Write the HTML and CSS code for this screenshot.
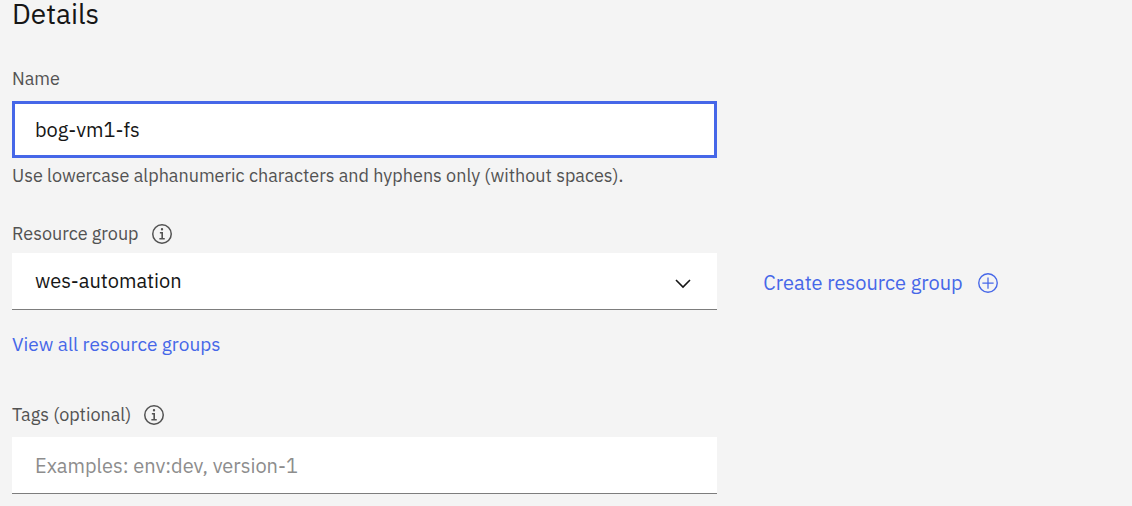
FILE: index.html
```html
<!DOCTYPE html>
<html lang="en">
<head>
<meta charset="utf-8">
<meta name="viewport" content="width=device-width, initial-scale=1">
<title>Details</title>
<link rel="stylesheet" href="styles.css">
</head>
<body>
<main class="details">
  <h1 class="title">Details</h1>
  <form class="form">
    <div class="field field-name">
      <div class="label-row"><label class="label" for="name">Name</label></div>
      <input class="control control-active" id="name" type="text" value="bog-vm1-fs" aria-describedby="name-help">
      <p class="helper" id="name-help">Use lowercase alphanumeric characters and hyphens only (without spaces).</p>
    </div>
    <div class="field field-group">
      <div class="label-row">
        <label class="label" for="group">Resource group</label>
        <button class="icon-button" type="button" aria-label="About resource groups">
          <svg class="icon" viewBox="0 0 32 32" aria-hidden="true"><path fill="currentColor" d="M17.6 22.4V12.6H12.6v2.4h2.4v7.4H11.8v2.4h8.6v-2.4zM16 6.4a1.9 1.9 0 1 0 0 3.8 1.9 1.9 0 0 0 0-3.8z"/><circle cx="16" cy="16" r="14.8" fill="none" stroke="currentColor" stroke-width="2.4"/></svg>
        </button>
      </div>
      <div class="select-wrap">
        <select class="control" id="group"><option>wes-automation</option></select>
        <svg class="chevron" viewBox="0 0 16 10" aria-hidden="true"><path d="M1 1l7 7 7-7" fill="none" stroke="currentColor" stroke-width="1.6"/></svg>
      </div>
    </div>
    <a class="create" href="#create">Create resource group
      <svg class="icon" viewBox="0 0 32 32" aria-hidden="true"><path d="M16 7v18M7 16h18" stroke="currentColor" stroke-width="2"/><circle cx="16" cy="16" r="14.8" fill="none" stroke="currentColor" stroke-width="2.2"/></svg>
    </a>
    <div class="view-all"><a class="link" href="#groups">View all resource groups</a></div>
    <div class="field field-tags">
      <div class="label-row">
        <label class="label" for="tags">Tags (optional)</label>
        <button class="icon-button" type="button" aria-label="About tags">
          <svg class="icon" viewBox="0 0 32 32" aria-hidden="true"><path fill="currentColor" d="M17.6 22.4V12.6H12.6v2.4h2.4v7.4H11.8v2.4h8.6v-2.4zM16 6.4a1.9 1.9 0 1 0 0 3.8 1.9 1.9 0 0 0 0-3.8z"/><circle cx="16" cy="16" r="14.8" fill="none" stroke="currentColor" stroke-width="2.4"/></svg>
        </button>
      </div>
      <input class="control" id="tags" type="text" placeholder="Examples: env:dev, version-1">
    </div>
  </form>
</main>
</body>
</html>
```
FILE: styles.css
```css
* { box-sizing: border-box; }

body {
  margin: 0;
  background: #f4f4f4;
  color: #161616;
  font-family: "IBM Plex Sans", Inter, Roboto, sans-serif;
  font-size: 20px;
  line-height: 24px;
}

.details { padding: 0 16px 12px 12px; }

.title {
  margin: 0 0 31px;
  font-size: 28px;
  font-weight: 400;
  line-height: 28px;
  padding-bottom: 8px;
}

.form {
  display: grid;
  grid-template-columns: minmax(0, 2fr) minmax(0, 1fr);
  column-gap: 46px;
}

.field,
.view-all { grid-column: 1; }

.label-row {
  display: flex;
  align-items: center;
  gap: 13px;
  margin-bottom: 7px;
}

.label,
.helper {
  color: #525252;
  font-size: 18px;
}

.field-name .label-row { margin-bottom: 10px; }

.helper { margin: 6px 0 0; }

.icon-button {
  display: flex;
  padding: 0;
  border: 0;
  background: none;
  color: #525252;
}

.icon {
  display: block;
  flex: none;
  width: 20px;
  height: 20px;
  overflow: visible;
}

.control {
  display: block;
  width: 100%;
  height: 57px;
  margin: 0;
  padding: 0 23px;
  border: 0;
  border-bottom: 1px solid #7d7d7d;
  border-radius: 0;
  outline: 0;
  appearance: none;
  background: #fff;
  color: #161616;
  font: inherit;
}

.control::placeholder {
  color: #8d8d8d;
  opacity: 1;
}

.control-active {
  padding: 0 20px;
  border: 3px solid #4667e8;
}

.field-group { margin-top: 34px; }

.select-wrap { position: relative; }

.chevron {
  position: absolute;
  top: 26px;
  right: 26px;
  width: 16px;
  height: 10px;
  pointer-events: none;
}

.create {
  display: flex;
  grid-column: 2;
  align-items: center;
  align-self: end;
  gap: 15px;
  margin-bottom: 15px;
  color: #4667e8;
  text-decoration: none;
  white-space: nowrap;
}

.link {
  color: #4667e8;
  font-size: 19px;
  text-decoration: none;
}

.view-all { margin-top: 22px; }

.field-tags { margin-top: 47px; }

.field-tags .label-row { margin-bottom: 10px; }
```
